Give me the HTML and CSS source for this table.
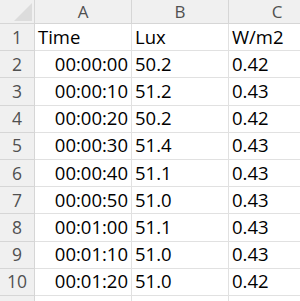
FILE: index.html
```html
<!DOCTYPE html>
<html>
<head>
<meta charset="utf-8">
<link rel="stylesheet" href="styles.css">
</head>
<body>
<div class="sheet">
  <div class="corner"><span class="tri"></span></div>
  <div class="colhead">A</div>
  <div class="colhead">B</div>
  <div class="colhead last">C</div>

  <div class="rowhead">1</div><div class="cell">Time</div><div class="cell">Lux</div><div class="cell last">W/m2</div>
  <div class="rowhead">2</div><div class="cell num">00:00:00</div><div class="cell">50.2</div><div class="cell last">0.42</div>
  <div class="rowhead">3</div><div class="cell num">00:00:10</div><div class="cell">51.2</div><div class="cell last">0.43</div>
  <div class="rowhead">4</div><div class="cell num">00:00:20</div><div class="cell">50.2</div><div class="cell last">0.42</div>
  <div class="rowhead">5</div><div class="cell num">00:00:30</div><div class="cell">51.4</div><div class="cell last">0.43</div>
  <div class="rowhead">6</div><div class="cell num">00:00:40</div><div class="cell">51.1</div><div class="cell last">0.43</div>
  <div class="rowhead">7</div><div class="cell num">00:00:50</div><div class="cell">51.0</div><div class="cell last">0.43</div>
  <div class="rowhead">8</div><div class="cell num">00:01:00</div><div class="cell">51.1</div><div class="cell last">0.43</div>
  <div class="rowhead">9</div><div class="cell num">00:01:10</div><div class="cell">51.0</div><div class="cell last">0.43</div>
  <div class="rowhead">10</div><div class="cell num">00:01:20</div><div class="cell">51.0</div><div class="cell last">0.42</div>
  <div class="rowhead stub"></div><div class="cell stub"></div><div class="cell stub"></div><div class="cell last stub"></div>
</div>
</body>
</html>
```

FILE: styles.css
```css
html, body {
  margin: 0;
  padding: 0;
  background: #ffffff;
  overflow: hidden;
}
body {
  width: 300px;
  height: 301px;
}
.sheet {
  display: grid;
  grid-template-columns: 35px 97px 97px 71px;
  grid-template-rows: 24px repeat(10, 27.2px) 5px;
  font-family: "Open Sans", "Noto Sans", sans-serif;
  font-size: 18.5px;
  line-height: 18.5px;
  color: #000;
}
.corner {
  background: #f0f0f0;
  border-right: 1px solid #d6d6d6;
  border-bottom: 1px solid #d6d6d6;
  box-sizing: border-box;
  position: relative;
}
.tri {
  position: absolute;
  right: 2px;
  bottom: 2px;
  width: 0;
  height: 0;
  border-left: 18px solid transparent;
  border-bottom: 18px solid #dcdcdc;
}
.colhead {
  background: #f0f0f0;
  border-right: 1px solid #d6d6d6;
  border-bottom: 1px solid #d6d6d6;
  box-sizing: border-box;
  color: #505050;
  font-size: 17px;
  display: flex;
  align-items: center;
  justify-content: center;
  padding-top: 1px;
}
.colhead.last {
  border-right: none;
  padding-left: 25px;
}
.rowhead {
  background: #f0f0f0;
  border-right: 1px solid #d6d6d6;
  border-bottom: 1px solid #d6d6d6;
  box-sizing: border-box;
  color: #505050;
  font-size: 17.5px;
  display: flex;
  align-items: flex-end;
  justify-content: center;
  padding-bottom: 4px;
}
.cell {
  border-right: 1px solid #e1e1e1;
  border-bottom: 1px solid #e1e1e1;
  box-sizing: border-box;
  display: flex;
  align-items: flex-end;
  justify-content: flex-start;
  padding: 0 3px 4px 3px;
  white-space: nowrap;
}
.cell.num {
  justify-content: flex-end;
}
.cell.last {
  border-right: none;
}
.stub {
  border-bottom: none;
  padding: 0;
}
```
